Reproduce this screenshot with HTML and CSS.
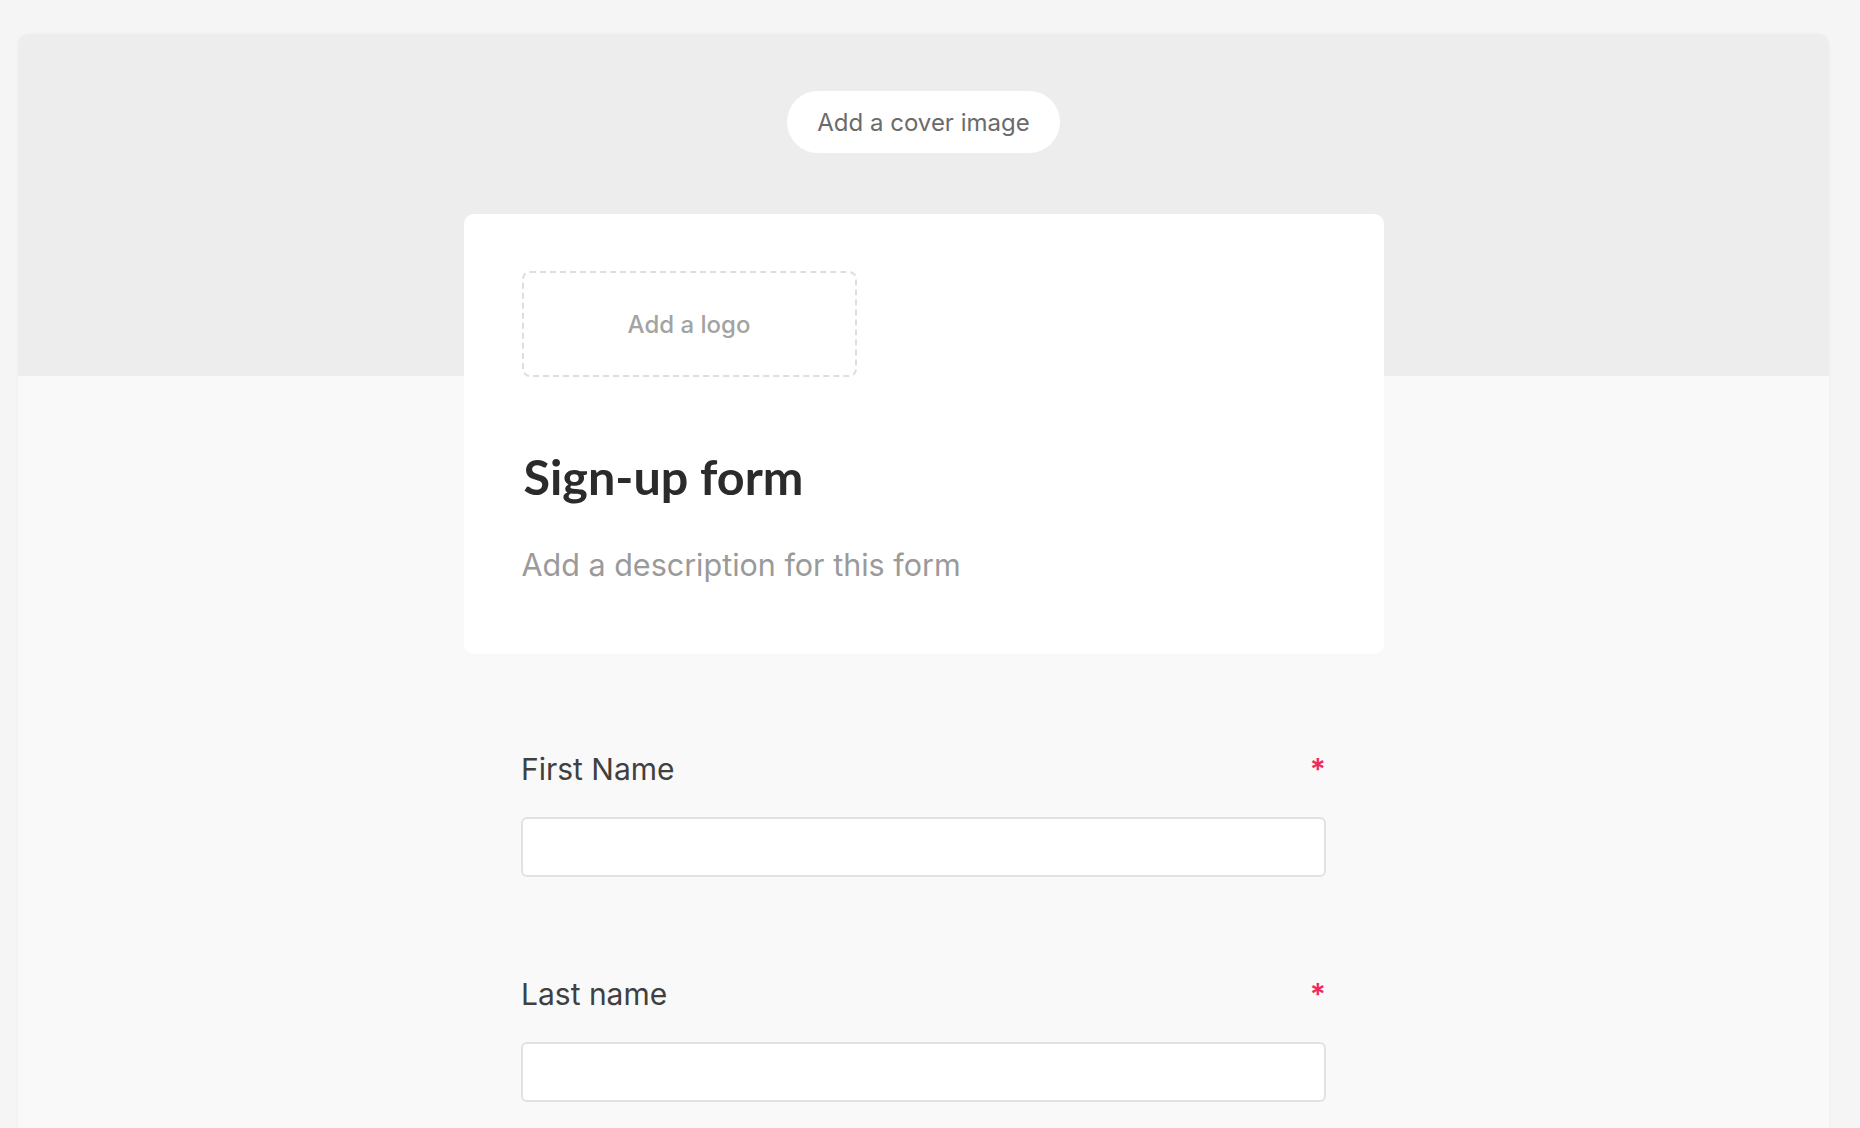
FILE: index.html
```html
<!DOCTYPE html>
<html lang="en">
<head>
    <meta charset="UTF-8">
    <meta name="viewport" content="width=device-width, initial-scale=1.0">
    <title>Sign-up form</title>
    <link rel="stylesheet" href="styles.css">
</head>
<body>
    <div id="page">
        <div id="cover">
            <button class="cover-button">Add a cover image</button>
        </div>

        <div id="header-card">
            <div class="logo-drop">Add a logo</div>
            <h1 class="form-title">Sign-up form</h1>
            <p class="form-description">Add a description for this form</p>
        </div>

        <form id="fields">
            <div class="field">
                <div class="field-label">
                    <span>First Name</span>
                    <span class="required">*</span>
                </div>
                <input type="text" class="field-input">
            </div>

            <div class="field">
                <div class="field-label">
                    <span>Last name</span>
                    <span class="required">*</span>
                </div>
                <input type="text" class="field-input">
            </div>
        </form>
    </div>
</body>
</html>
```

FILE: styles.css
```css
* {
    margin: 0;
    padding: 0;
    box-sizing: border-box;
}

body {
    font-family: Inter, "Liberation Sans", sans-serif;
    background-color: #f5f5f5;
    padding: 34px 31px 0 18px;
    overflow: hidden;
}

#page {
    background: #f9f9f9;
    border-radius: 10px 10px 0 0;
    box-shadow: 0 0 4px rgba(0, 0, 0, 0.03);
    padding-bottom: 120px;
}

#cover {
    height: 342px;
    background: #ededed;
    border-radius: 10px 10px 0 0;
    display: flex;
    justify-content: center;
    align-items: flex-start;
    padding-top: 57px;
}

.cover-button {
    height: 62px;
    width: 273px;
    border: none;
    border-radius: 31px;
    background: #ffffff;
    color: #6b6b6b;
    font-family: Inter, "Liberation Sans", sans-serif;
    font-size: 24px;
    cursor: pointer;
}

#header-card {
    position: relative;
    width: 920px;
    margin: -162px auto 0;
    background: #ffffff;
    border-radius: 10px;
    padding: 57px 58px 71px;
}

.logo-drop {
    width: 335px;
    height: 106px;
    border: 2px dashed #dedede;
    border-radius: 8px;
    display: flex;
    align-items: center;
    justify-content: center;
    color: #a3a3a3;
    font-size: 24px;
    font-weight: 500;
}

.form-title {
    margin: 70px 0 0 2px;
    font-family: Lato, "Open Sans", sans-serif;
    font-size: 48.5px;
    line-height: 59px;
    font-weight: 700;
    color: #2b2b2b;
}

.form-description {
    margin-top: 40px;
    font-size: 30.5px;
    line-height: 37px;
    color: #9a9a9a;
}

#fields {
    width: 805px;
    margin: 0 auto;
    padding-top: 97px;
}

.field + .field {
    margin-top: 99px;
}

.field-label {
    display: flex;
    justify-content: space-between;
    align-items: flex-start;
    font-size: 30px;
    line-height: 36px;
    color: #404040;
}

.required {
    color: #f2295f;
    font-weight: 600;
}

.field-input {
    display: block;
    width: 100%;
    height: 60px;
    margin-top: 30px;
    background: #ffffff;
    border: 2px solid #e2e2e2;
    border-radius: 6px;
}
```
